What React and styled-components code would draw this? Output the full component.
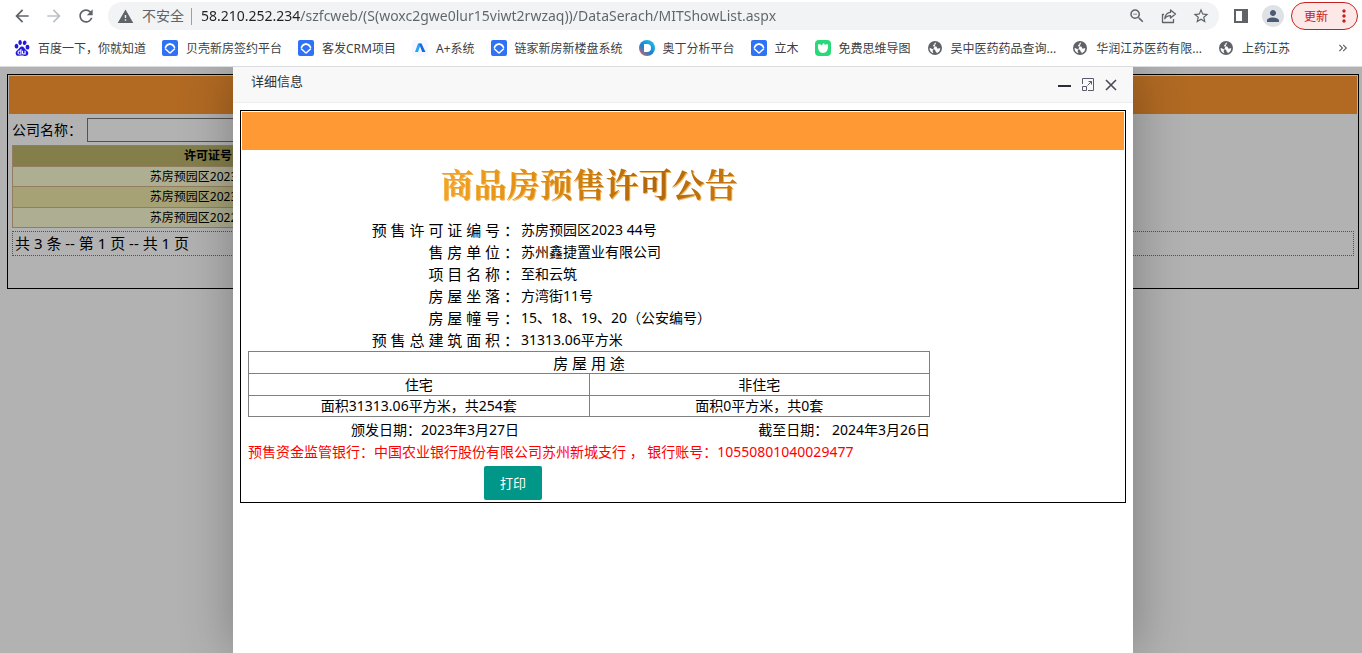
import styled, { createGlobalStyle } from "styled-components";
import {
  MdArrowBack,
  MdArrowForward,
  MdRefresh,
  MdWarning,
  MdZoomOut,
  MdStarBorder,
  MdPerson,
  MdMoreVert,
  MdKeyboardDoubleArrowRight,
} from "react-icons/md";
import { SiBaidu } from "react-icons/si";

const GlobalStyle = createGlobalStyle`
  * {
    box-sizing: border-box;
  }
  body {
    margin: 0;
    background: #fff;
    color: #000;
    font-family: "Noto Sans", "Noto Sans CJK SC", sans-serif;
    font-size: 14px;
  }
  button, input {
    font-family: inherit;
  }
`;

const Browser = styled.div`
  display: flex;
  flex-direction: column;
  height: 100vh;
  overflow: hidden;
`;

const Chrome = styled.header`
  flex: none;
  border-bottom: 1px solid #dadce0;
`;

const Toolbar = styled.div`
  display: flex;
  align-items: center;
  height: 32px;
  padding: 0 4px 0 12px;
`;

const ToolButton = styled.button`
  display: flex;
  align-items: center;
  justify-content: center;
  flex: none;
  width: ${(props) => props.$width || 32}px;
  height: 28px;
  padding: 0;
  border: none;
  background: none;
  color: ${(props) => (props.disabled ? "#bdc1c6" : "#5f6368")};
`;

const NavButtons = styled.div`
  display: flex;
  width: 96px;
  & > button:first-child {
    justify-content: flex-start;
  }
`;

const AddressBar = styled.div`
  display: flex;
  align-items: center;
  flex: 1;
  height: 28px;
  padding: 0 2px 0 9px;
  border-radius: 14px;
  background: #f1f3f4;
  color: #5f6368;
`;

const Security = styled.span`
  display: flex;
  align-items: center;
  gap: 8px;
  padding-right: 7px;
  border-right: 1px solid #9aa0a6;
  line-height: 16px;
  white-space: nowrap;
`;

const UrlInput = styled.input`
  flex: 1;
  min-width: 0;
  height: 28px;
  padding: 0 0 2px 9px;
  border: none;
  outline: none;
  font-size: 14px;
  color: transparent;
  /* host part dark, path part grey */
  background: linear-gradient(90deg, #202124 109px, #5f6368 109px);
  background-clip: text;
  -webkit-background-clip: text;
`;

const Avatar = styled.button`
  display: flex;
  align-items: center;
  justify-content: center;
  width: 22px;
  height: 22px;
  margin-right: 7px;
  padding: 0;
  border: none;
  border-radius: 50%;
  background: #dee1e6;
  color: #4a5a73;
`;

const UpdateButton = styled.button`
  display: flex;
  align-items: center;
  justify-content: space-between;
  width: 67px;
  height: 28px;
  padding: 0 3px 0 12px;
  border: 1px solid #c5221f;
  border-radius: 14px;
  background: #fce8e6;
  color: #c5221f;
  font-size: 12px;
  white-space: nowrap;
`;

const Bookmarks = styled.nav`
  display: flex;
  align-items: center;
  gap: 16px;
  height: 34px;
  padding: 0 12px 2px 14px;
`;

const Bookmark = styled.a`
  display: flex;
  align-items: center;
  gap: 8px;
  color: #3c4043;
  font-size: 12px;
  line-height: 16px;
  text-decoration: none;
  white-space: nowrap;
  svg {
    flex: none;
  }
  span {
    padding-top: 2px;
  }
`;

const More = styled.button`
  display: flex;
  margin-left: auto;
  padding: 0;
  border: none;
  background: none;
  color: #5f6368;
`;

const Page = styled.main`
  position: relative;
  flex: 1;
  min-height: 0;
  padding: 7px 3px 0 7px;
  overflow: hidden;
`;

const Frame = styled.section`
  padding: 1px;
  border: 1px solid #000;
`;

const Banner = styled.div`
  height: 38px;
  background: #ff9933;
`;

const ListBody = styled.div`
  display: flex;
  flex-direction: column;
  gap: 3px;
  padding: 4px 3px 31px;
`;

const SearchRow = styled.div`
  display: flex;
  align-items: center;
  gap: 5px;
  height: 24px;
  label {
    padding-bottom: 2px;
    white-space: nowrap;
  }
  input {
    width: 300px;
    height: 24px;
    border: 1px solid #767676;
    background: #fff;
  }
`;

const PermitTable = styled.table`
  width: 392px;
  border-collapse: collapse;
  font-size: 12px;
  line-height: 16px;
  text-align: center;
  th,
  td {
    height: 20px;
    padding: 0;
    border: 1px solid tan;
  }
  th {
    height: 21px;
    background: darkkhaki;
  }
  td {
    background: lightgoldenrodyellow;
  }
  tr:nth-child(even) td {
    height: 21px;
    background: palegoldenrod;
  }
`;

const Pager = styled.div`
  height: 25px;
  padding: 0 2px;
  border: 1px dotted #767676;
  font-size: 15px;
  line-height: 22px;
`;

const Mask = styled.div`
  position: absolute;
  inset: 0;
  display: flex;
  justify-content: center;
  padding-left: 4px;
  background: rgba(0, 0, 0, 0.3);
`;

const Dialog = styled.div`
  width: 900px;
  max-width: 100%;
  background: #fff;
  box-shadow: 1px 1px 50px rgba(0, 0, 0, 0.3);
`;

const DialogTitle = styled.div`
  display: flex;
  align-items: center;
  justify-content: space-between;
  height: 36px;
  padding: 0 14px 0 18px;
  border-bottom: 1px solid #eee;
  background: #f8f8f8;
  color: #333;
  h2 {
    margin: 0;
    padding-bottom: 7px;
    font-size: 13px;
    font-weight: 400;
    line-height: 18px;
  }
`;

const WindowButtons = styled.div`
  display: flex;
  gap: 7px;
  button {
    display: flex;
    padding: 0;
    border: none;
    background: none;
    color: #2d2c3b;
  }
`;

const DialogBody = styled.div`
  padding: 7px;
`;

const Notice = styled.div`
  display: flex;
  flex-direction: column;
  width: 682px;
  max-width: 100%;
  margin-left: 6px;
  padding-bottom: 1px;
`;

const NoticeTitle = styled.h1`
  align-self: center;
  margin: 0;
  padding-bottom: 3px;
  background: linear-gradient(100deg, #f5a623 0%, #de8c10 35%, #b0670a 70%, #c97a12 100%);
  background-clip: text;
  -webkit-background-clip: text;
  color: transparent;
  font-family: "Noto Serif CJK SC", "Noto Sans CJK SC", serif;
  font-size: 33px;
  font-weight: 700;
  line-height: 66px;
  filter: drop-shadow(1px 1px 0 #f2b45a);
`;

const Fields = styled.dl`
  display: grid;
  grid-template-columns: 271px 1fr;
  column-gap: 2px;
  margin: 0;
  line-height: 22px;
  dt {
    font-size: 15px;
    text-align: right;
  }
  dd {
    margin: 0;
  }
`;

const UsageTable = styled.table`
  width: 100%;
  border-collapse: collapse;
  table-layout: fixed;
  line-height: 20px;
  text-align: center;
  th,
  td {
    height: 22px;
    padding: 0;
    border: 1px solid #808080;
  }
  td {
    height: 21px;
  }
  th {
    font-weight: 400;
  }
  thead tr:first-child th {
    font-size: 15px;
  }
`;

const Dates = styled.div`
  display: grid;
  grid-template-columns: 271px 1fr;
  padding-top: 2px;
  line-height: 22px;
  text-align: right;
`;

const Bank = styled.p`
  margin: 0;
  color: #f00;
  line-height: 22px;
  white-space: pre;
`;

const PrintButton = styled.button`
  align-self: flex-start;
  height: 34px;
  margin: 3px 0 0 236px;
  padding: 0 16px 2px;
  border: none;
  border-radius: 2px;
  background: #009688;
  color: #fff;
  font-size: 13px;
`;

const ShareIcon = () => (
  <svg width="16" height="16" viewBox="0 0 16 16" fill="none" stroke="currentColor" strokeWidth="1.3" strokeLinejoin="round">
    <path d="M3 6.5H1.5v8h11V11" />
    <path d="M9.5 2l5 4-5 4V7.6C6.800 7.600 5 8.600 3.800 10.800 4.200 7 6.200 4.600 9.500 4.400z" />
  </svg>
);

const SidePanelIcon = () => (
  <svg width="14" height="14" viewBox="0 0 14 14">
    <path fill="currentColor" fillRule="evenodd" d="M0 0h14v14H0zM2 2v10h6V2z" />
  </svg>
);

const HouseIcon = () => (
  <svg width="16" height="16" viewBox="0 0 16 16">
    <rect width="16" height="16" rx="2" fill="#3072f6" />
    <path d="M3.500 7.500a4.700 4.700 0 0 1 9 0" fill="none" stroke="#fff" strokeWidth="1.600" strokeLinecap="round" />
    <path d="M3.500 7.500L7.200 4q.8-.7 1.600 0l3.700 3.500" fill="none" stroke="#fff" strokeWidth="1" />
    <path d="M3.500 9l3.600 3.300q.9.700 1.800 0L12.500 9" fill="none" stroke="#fff" strokeWidth="1.500" strokeLinecap="round" />
  </svg>
);

const APlusIcon = () => (
  <svg width="16" height="16" viewBox="0 0 16 16">
    <rect width="16" height="16" rx="3" fill="#f5f9ff" />
    <path d="M6 3.500h3L6 12H3z" fill="#25a5f5" />
    <path d="M7 3.500h2.500L13.500 12h-3.300z" fill="#1668e8" />
  </svg>
);

const RingIcon = () => (
  <svg width="16" height="16" viewBox="0 0 16 16">
    <defs>
      <linearGradient id="ring" x1="0.9" y1="0" x2="0.1" y2="0.9">
        <stop offset="0" stopColor="#20c5e8" />
        <stop offset="0.6" stopColor="#1c7fd0" />
        <stop offset="1" stopColor="#c9646c" />
      </linearGradient>
    </defs>
    <circle cx="8" cy="8" r="8" fill="url(#ring)" />
    <path d="M5 4h3a4 4 0 0 1 0 8H5z" fill="#fff" />
  </svg>
);

const MindIcon = () => (
  <svg width="16" height="16" viewBox="0 0 16 16">
    <rect width="16" height="16" rx="4" fill="#28d978" />
    <path d="M3 4.500q2-1 4 1 .4-2 2-2.500l.8 2Q11 4 13 4.500c.6 5-1.600 8.500-5 8.500S2.400 9.500 3 4.500z" fill="#fff" />
  </svg>
);

const GlobeIcon = () => (
  <svg width="16" height="16" viewBox="0 0 16 16">
    <circle cx="8" cy="8" r="7" fill="#5f6368" />
    <path
      d="M9.200 2.600c-1.700.2-2 1-1.900 1.900.1.700-1.300.5-1.300 1.300s1.500.8 2.400.8 1.500.3 1.500 1.100 1 .9 1.900.8l1.400-.4c.1 2.700-1.500 4.700-3.700 5.200.3-.9-.1-1.500-.9-1.700-.7-.2.2-1.300-.6-1.800-.7-.5-2.100-.1-3-.8-.8-.6-1.600-1-2.400-1-.1 2.700 1.500 4.700 3.600 5.300.2-.9-.6-1.400-.6-2.200"
      fill="#fff"
    />
  </svg>
);

const bookmarks = [
  { name: "百度一下，你就知道", icon: <SiBaidu size={16} color="#2319dc" /> },
  { name: "贝壳新房签约平台", icon: <HouseIcon /> },
  { name: "客发CRM项目", icon: <HouseIcon /> },
  { name: "A+系统", icon: <APlusIcon /> },
  { name: "链家新房新楼盘系统", icon: <HouseIcon /> },
  { name: "奥丁分析平台", icon: <RingIcon /> },
  { name: "立木", icon: <HouseIcon /> },
  { name: "免费思维导图", icon: <MindIcon /> },
  { name: "吴中医药药品查询...", icon: <GlobeIcon /> },
  { name: "华润江苏医药有限...", icon: <GlobeIcon /> },
  { name: "上药江苏", icon: <GlobeIcon /> },
];

const permits = ["苏房预园区2023 44号", "苏房预园区2023 43号", "苏房预园区2022 42号"];

const fields = [
  ["预 售 许 可 证 编 号 ：", "苏房预园区2023 44号"],
  ["售 房 单 位 ：", "苏州鑫捷置业有限公司"],
  ["项 目 名 称 ：", "至和云筑"],
  ["房 屋 坐 落 ：", "方湾街11号"],
  ["房 屋 幢 号 ：", "15、18、19、20（公安编号）"],
  ["预 售 总 建 筑 面 积 ：", "31313.06平方米"],
];

const BrowserChrome = () => {
  return (
    <Chrome>
      <Toolbar>
        <NavButtons>
          <ToolButton aria-label="后退">
            <MdArrowBack size={20} />
          </ToolButton>
          <ToolButton aria-label="前进" disabled $width={20}>
            <MdArrowForward size={20} />
          </ToolButton>
          <ToolButton aria-label="刷新" $width={44}>
            <MdRefresh size={20} />
          </ToolButton>
        </NavButtons>
        <AddressBar>
          <Security>
            <MdWarning size={17} />
            不安全
          </Security>
          <UrlInput
            aria-label="地址"
            defaultValue="58.210.252.234/szfcweb/(S(woxc2gwe0lur15viwt2rwzaq))/DataSerach/MITShowList.aspx"
          />
          <ToolButton aria-label="缩放">
            <MdZoomOut size={18} />
          </ToolButton>
          <ToolButton aria-label="分享">
            <ShareIcon />
          </ToolButton>
          <ToolButton aria-label="收藏">
            <MdStarBorder size={18} />
          </ToolButton>
        </AddressBar>
        <ToolButton aria-label="侧边栏" $width={43}>
          <SidePanelIcon />
        </ToolButton>
        <Avatar aria-label="用户">
          <MdPerson size={18} />
        </Avatar>
        <UpdateButton>
          更新
          <MdMoreVert size={20} />
        </UpdateButton>
      </Toolbar>
      <Bookmarks>
        {bookmarks.map((item) => (
          <Bookmark key={item.name} href="#">
            {item.icon}
            <span>{item.name}</span>
          </Bookmark>
        ))}
        <More aria-label="更多书签">
          <MdKeyboardDoubleArrowRight size={14} />
        </More>
      </Bookmarks>
    </Chrome>
  );
};

const PermitList = () => {
  return (
    <Frame>
      <Banner />
      <ListBody>
        <SearchRow>
          <label htmlFor="company">公司名称：</label>
          <input id="company" type="text" />
        </SearchRow>
        <PermitTable>
          <thead>
            <tr>
              <th>许可证号</th>
            </tr>
          </thead>
          <tbody>
            {permits.map((permit) => (
              <tr key={permit}>
                <td>{permit}</td>
              </tr>
            ))}
          </tbody>
        </PermitTable>
        <Pager>共 3 条 -- 第 1 页 -- 共 1 页</Pager>
      </ListBody>
    </Frame>
  );
};

const DetailDialog = () => {
  return (
    <Dialog role="dialog" aria-labelledby="dialog-title">
      <DialogTitle>
        <h2 id="dialog-title">详细信息</h2>
        <WindowButtons>
          <button aria-label="最小化">
            <svg width="16" height="16" viewBox="0 0 16 16">
              <path d="M1 8h13v2H1z" fill="currentColor" />
            </svg>
          </button>
          <button aria-label="最大化">
            <svg width="16" height="16" viewBox="0 0 16 16" fill="none" stroke="#5c5b6b">
              <path d="M2.500 7V1.500h11v12H8M2.500 9.500h4v4h-4zM7.500 8.500l4-4M8.500 4.500h3v3" />
            </svg>
          </button>
          <button aria-label="关闭">
            <svg width="16" height="16" viewBox="0 0 16 16" stroke="#4a4959" strokeWidth="1.600">
              <path d="M3 3l10 10M13 3L3 13" />
            </svg>
          </button>
        </WindowButtons>
      </DialogTitle>
      <DialogBody>
        <Frame>
          <Banner />
          <Notice>
            <NoticeTitle>商品房预售许可公告</NoticeTitle>
            <Fields>
              {fields.map(([label, value]) => [
                <dt key={label}>{label}</dt>,
                <dd key={value}>{value}</dd>,
              ])}
            </Fields>
            <UsageTable>
              <thead>
                <tr>
                  <th colSpan={2}>房 屋 用 途</th>
                </tr>
                <tr>
                  <th>住宅</th>
                  <th>非住宅</th>
                </tr>
              </thead>
              <tbody>
                <tr>
                  <td>面积31313.06平方米，共254套</td>
                  <td>面积0平方米，共0套</td>
                </tr>
              </tbody>
            </UsageTable>
            <Dates>
              <span>颁发日期：2023年3月27日</span>
              <span>截至日期： 2024年3月26日</span>
            </Dates>
            <Bank>预售资金监管银行：中国农业银行股份有限公司苏州新城支行 ， 银行账号：10550801040029477</Bank>
            <PrintButton>打印</PrintButton>
          </Notice>
        </Frame>
      </DialogBody>
    </Dialog>
  );
};

const App = () => {
  return (
    <>
      <GlobalStyle />
      <Browser>
        <BrowserChrome />
        <Page>
          <PermitList />
          <Mask>
            <DetailDialog />
          </Mask>
        </Page>
      </Browser>
    </>
  );
};

export default App;
